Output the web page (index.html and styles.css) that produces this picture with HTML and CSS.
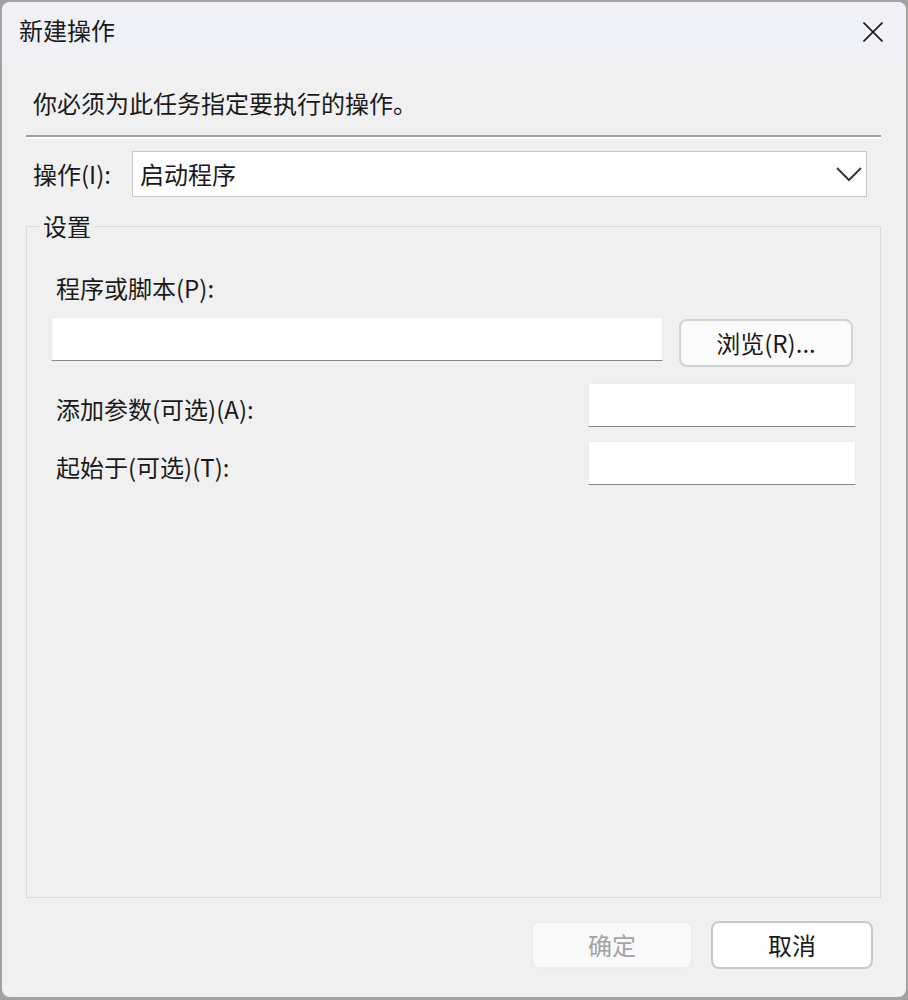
FILE: index.html
```html
<!DOCTYPE html>
<html lang="zh-CN">
<head>
<meta charset="utf-8">
<title>新建操作</title>
<link rel="stylesheet" href="styles.css">
</head>
<body>
<div class="window">
  <div class="titlebar">
    <span class="title">新建操作</span>
    <span class="close">
      <svg width="20" height="20" viewBox="0 0 20 20"><path d="M0.5 0.5 L19.5 19.5 M19.5 0.5 L0.5 19.5" stroke="#1a1a1a" stroke-width="1.6" fill="none"/></svg>
    </span>
  </div>
  <div class="content">
    <div class="desc">你必须为此任务指定要执行的操作。</div>
    <div class="separator"></div>
    <div class="action-row">
      <span class="action-label">操作(I):</span>
      <div class="combo">
        <span class="combo-text">启动程序</span>
        <svg class="chevron" width="26" height="15" viewBox="0 0 26 15"><path d="M1 1 L13 13 L25 1" stroke="#3a3a3a" stroke-width="2" fill="none"/></svg>
      </div>
    </div>
    <fieldset class="group">
      <legend class="legend">设置</legend>
      <div class="label first">程序或脚本(P):</div>
      <div class="program-row">
        <div class="input program"></div>
        <div class="btn browse">浏览(R)...</div>
      </div>
      <div class="field-row args">
        <span class="label inline">添加参数(可选)(A):</span>
        <div class="input short"></div>
      </div>
      <div class="field-row start">
        <span class="label inline">起始于(可选)(T):</span>
        <div class="input short"></div>
      </div>
    </fieldset>
    <div class="footer">
      <div class="btn footer-btn disabled">确定</div>
      <div class="btn footer-btn cancel">取消</div>
    </div>
  </div>
</div>
</body>
</html>
```

FILE: styles.css
```css
* { box-sizing: border-box; }
html, body { margin: 0; padding: 0; }
body {
  background: #a2a2a2;
  width: 908px;
  height: 1000px;
  overflow: hidden;
  font-family: "Noto Sans CJK SC", "Noto Sans", sans-serif;
  font-size: 24px;
  color: #1a1a1a;
}
.window {
  margin: 2px 0 0 2px;
  width: 904px;
  height: 995px;
  background: #f0f0f0;
  border-radius: 8px;
  overflow: hidden;
  display: flex;
  flex-direction: column;
}
.titlebar {
  height: 60px;
  flex: none;
  background: #eff1f7;
  display: flex;
  align-items: center;
  justify-content: space-between;
  padding: 0 23px 4px 17px;
}
.title { line-height: 32px; }
.close { display: flex; margin-top: 4px; }
.content {
  flex: 1;
  display: flex;
  flex-direction: column;
  padding: 0 25px 0 24px;
}
.desc {
  margin-top: 25px;
  line-height: 32px;
  padding-left: 7px;
}
.separator {
  margin-top: 16px;
  height: 4px;
  border-top: 2px solid #a0a0a0;
  border-bottom: 2px solid #ffffff;
}
.action-row {
  margin-top: 12px;
  display: flex;
  align-items: center;
  height: 46px;
}
.action-label {
  width: 106px;
  padding-left: 7px;
  line-height: 32px;
}
.combo {
  width: 735px;
  height: 46px;
  background: #fdfdfd;
  border: 1px solid #c8c8c8;
  display: flex;
  align-items: center;
  justify-content: space-between;
  padding: 0 4px 0 7px;
}
.combo-text { line-height: 32px; }
.group {
  margin: 13px 0 0 0;
  padding: 0 24px 0 24px;
  border: 1px solid #d9d9d9;
  flex: 1;
  min-width: 0;
}
.legend {
  margin-left: -12px;
  padding: 0 4px;
  line-height: 32px;
}
.label { line-height: 32px; padding-left: 5px; }
.label.first { margin-top: 30px; }
.input {
  height: 44px;
  background: #ffffff;
  border: 1px solid #ececec;
  border-bottom: 1px solid #878787;
}
.program-row {
  margin-top: 13px;
  display: flex;
  align-items: flex-start;
  gap: 16px;
}
.input.program { width: 612px; }
.btn {
  display: flex;
  align-items: center;
  justify-content: center;
  border-radius: 8px;
  line-height: 32px;
}
.browse {
  margin-top: 2px;
  width: 174px;
  height: 48px;
  background: #fbfbfb;
  border: 2px solid #d2d2d2;
}
.field-row {
  display: flex;
  align-items: flex-start;
  justify-content: space-between;
}
.field-row .label { margin-top: 10px; }
.field-row.args { margin-top: 16px; }
.field-row.start { margin-top: 14px; }
.input.short { width: 268px; }
.footer {
  flex: none;
  display: flex;
  justify-content: flex-end;
  gap: 18px;
  padding: 23px 8px 28px 0;
}
.footer-btn {
  width: 162px;
  height: 48px;
}
.disabled {
  background: #f9f9f9;
  border: 2px solid #ececec;
  color: #a2a2a2;
}
.cancel {
  background: #fefefe;
  border: 2px solid #c8c8c8;
}
```
